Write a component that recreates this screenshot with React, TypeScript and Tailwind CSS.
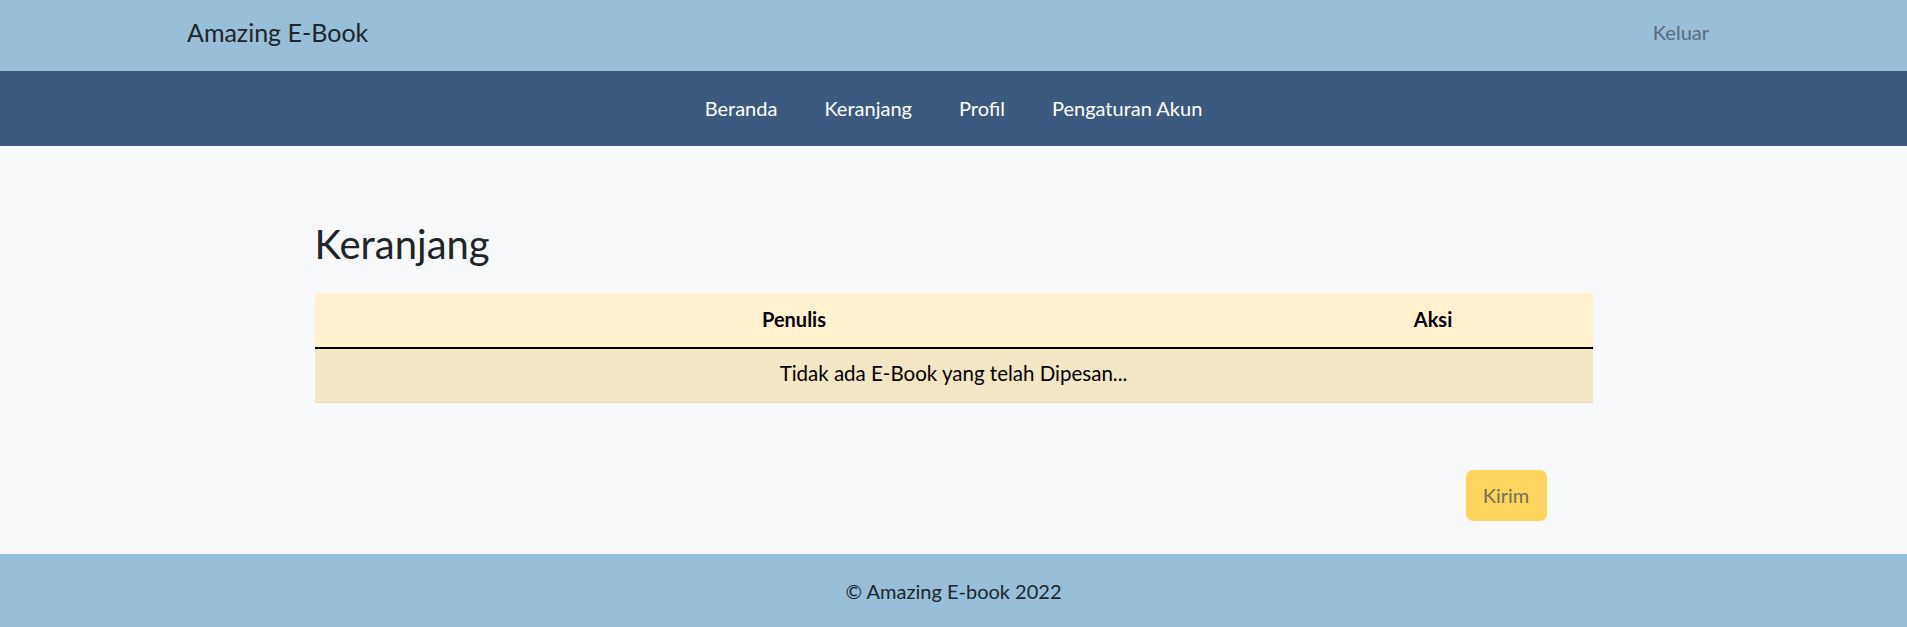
const navLinks = ['Beranda', 'Keranjang', 'Profil', 'Pengaturan Akun'];

export default function App() {
  return (
    <div className="min-h-screen bg-[#f8f9fa] text-[#212529] font-['Lato',sans-serif]">
      {/* Top bar */}
      <header className="h-[71px] bg-[#97bfd8] flex items-center justify-between pl-[187px] pr-[198px] pb-[7px]">
        <a className="text-[25px] text-[#212529] leading-none">Amazing E-Book</a>
        <a className="text-[20px] text-[#5b6b78] leading-none">Keluar</a>
      </header>

      {/* Menu */}
      <nav className="h-[75px] bg-[#3c5a7f] flex items-center justify-center gap-[47px] pb-[2px]">
        {navLinks.map((link) => (
          <a key={link} className="text-[20px] text-white leading-none">
            {link}
          </a>
        ))}
      </nav>

      {/* Content */}
      <main className="h-[408px] pt-[74px]">
        <div className="w-[1278px] mx-auto">
          <h2 className="text-[40px] leading-[48px] font-normal mb-[25px]">Keranjang</h2>

          <div className="text-[20px]">
            <div className="grid grid-cols-[959px_1fr] h-[54px] items-center pb-[2px] bg-[#fff2cc] font-bold text-black text-center">
              <div>Penulis</div>
              <div>Aksi</div>
            </div>
            <div className="h-[2px] bg-black"></div>
            <div className="h-[54px] flex items-center justify-center pb-[4px] bg-[#f2e6c3] border-b border-[#e3d8b7] text-black text-[20.5px]">
              Tidak ada E-Book yang telah Dipesan...
            </div>
          </div>

          <div className="flex justify-end pr-[46px] mt-[67px]">
            <button
              disabled
              className="w-[81px] h-[51px] rounded-[7px] bg-[#fdd55c] text-[20px] text-[#766f5c] pb-[2px]"
            >
              Kirim
            </button>
          </div>
        </div>
      </main>

      {/* Footer */}
      <footer className="h-[73px] bg-[#97bfd8] flex items-center justify-center text-[20px] text-[#212529]">
        © Amazing E-book 2022
      </footer>
    </div>
  );
}
